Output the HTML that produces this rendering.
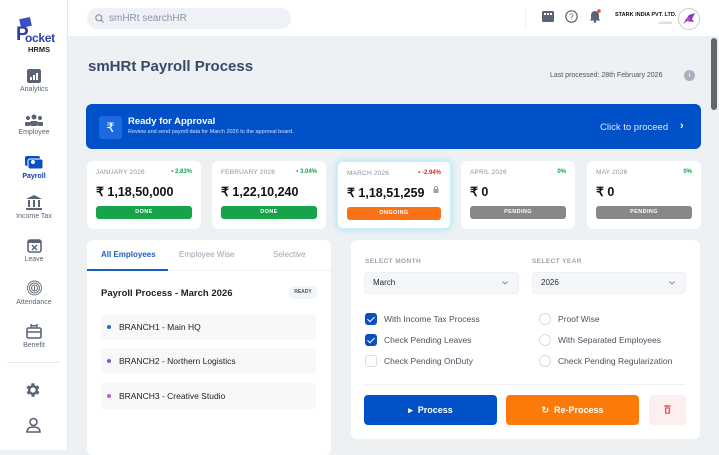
<!DOCTYPE html>
<html><head><meta charset="utf-8">
<style>
*{box-sizing:border-box;margin:0;padding:0}
body{width:719px;height:450px;overflow:hidden;background:#eef1f4;font-family:"Liberation Sans",sans-serif;position:relative;color:#1c2430}
.abs{position:absolute}
.side{left:0;top:0;width:68px;height:450px;background:#fff;border-right:1px solid #e3e6ea}
.nav{position:absolute;left:0;width:68px;text-align:center;font-size:7px;color:#5b6475}
.nav svg{display:block;margin:0 auto 3px}
.top{left:68px;top:0;width:651px;height:36px;background:#fff}
.card{background:#fff;border-radius:6px;height:68px;top:161px;width:114px;padding:8px 9px}
.card .m{font-size:6.5px;color:#8a93a0;letter-spacing:.2px}
.card .p{position:absolute;right:9px;top:8px;font-size:6px;font-weight:bold;color:#16a34a}
.card .v{font-size:12.5px;font-weight:bold;margin-top:8px;color:#111}
.card .b{position:absolute;left:9px;right:9px;top:45px;height:13px;border-radius:3px;color:#fff;font-size:5.5px;font-weight:bold;text-align:center;line-height:13px;letter-spacing:.4px}
.br{left:101px;width:215px;height:26px;background:#f7f8fa;border-radius:4px;font-size:8.5px;line-height:26px;padding-left:18px;color:#222}
.br i{position:absolute;left:6px;top:11px;width:4px;height:4px;border-radius:50%}
.cb{position:absolute;font-size:8.5px;color:#4a5260}
.cb b{position:absolute;left:-19px;top:-1px;width:12px;height:12px;border-radius:3px;border:1px solid #d9dde3;background:#fff}
.cb b.on{background:#0b4fc4;border-color:#0b4fc4}
.cb b.on:after{content:"";position:absolute;left:3px;top:1px;width:3px;height:6px;border:solid #fff;border-width:0 1.5px 1.5px 0;transform:rotate(45deg)}
.cb b.r{border-radius:50%}
.chev{position:absolute;right:10px;top:8px}
</style></head><body>
<div class="abs side">
  <div class="abs" style="left:16px;top:18px;width:40px;height:34px">
    <div class="abs" style="left:4px;top:0;width:11px;height:9px;background:#3b4fc4;transform:rotate(-12deg)"></div>
    <div class="abs" style="left:0;top:7px;font-size:19px;font-weight:bold;color:#2f3fa8;line-height:19px">P</div>
    <div class="abs" style="left:9px;top:13px;font-size:12px;font-weight:bold;color:#2f3fa8;letter-spacing:-.3px">ocket</div>
    <div class="abs" style="left:12px;top:27px;font-size:7.5px;font-weight:bold;color:#222">HRMS</div>
  </div>
  <div class="nav" style="top:69px"><svg width="14" height="14"><rect width="14" height="14" rx="2" fill="#5b6475"/><rect x="3" y="8" width="2" height="3" fill="#fff"/><rect x="6" y="6" width="2" height="5" fill="#fff"/><rect x="9" y="4" width="2" height="7" fill="#fff"/></svg>Analytics</div>
  <div class="nav" style="top:114px"><svg width="18" height="12"><circle cx="9" cy="3" r="2.5" fill="#5b6475"/><circle cx="3" cy="4" r="2" fill="#5b6475"/><circle cx="15" cy="4" r="2" fill="#5b6475"/><rect x="5" y="7" width="8" height="5" rx="2" fill="#5b6475"/><rect x="0" y="8" width="5" height="4" rx="1" fill="#5b6475"/><rect x="13" y="8" width="5" height="4" rx="1" fill="#5b6475"/></svg>Employee</div>
  <div class="nav" style="top:156px;color:#0b3fa8;font-weight:bold"><svg width="18" height="14"><rect x="0" y="0" width="15" height="10" rx="2" fill="#0b4fc4"/><rect x="3" y="3" width="15" height="10" rx="2" fill="#0b4fc4" stroke="#fff" stroke-width="1"/><circle cx="8" cy="6" r="2" fill="#fff"/></svg>Payroll</div>
  <div class="nav" style="top:195px"><svg width="16" height="15"><path d="M8 0 L16 4 L0 4 Z" fill="#5b6475"/><rect x="2" y="5" width="2" height="7" fill="#5b6475"/><rect x="7" y="5" width="2" height="7" fill="#5b6475"/><rect x="12" y="5" width="2" height="7" fill="#5b6475"/><rect x="0" y="13" width="16" height="2" fill="#5b6475"/></svg>Income Tax</div>
  <div class="nav" style="top:238px"><svg width="15" height="15"><rect x="1" y="2" width="13" height="12" rx="2" fill="none" stroke="#5b6475" stroke-width="1.6"/><rect x="1" y="2" width="13" height="3" fill="#5b6475"/><path d="M5 7 L10 12 M10 7 L5 12" stroke="#5b6475" stroke-width="1.4"/></svg>Leave</div>
  <div class="nav" style="top:280px"><svg width="15" height="16"><g fill="none" stroke="#6b7380" stroke-width="1"><circle cx="7.5" cy="8" r="7"/><circle cx="7.5" cy="8" r="5"/><circle cx="7.5" cy="8" r="3"/><path d="M7.5 6v5"/></g></svg>Attendance</div>
  <div class="nav" style="top:324px"><svg width="16" height="15"><rect x="1" y="4" width="14" height="10" rx="1.5" fill="none" stroke="#5b6475" stroke-width="1.6"/><path d="M1 8h14M5 4 V0 M11 4 V0 M5 1 Q8 3 11 1" stroke="#5b6475" stroke-width="1.4" fill="none"/></svg>Benefit</div>
  <div class="abs" style="left:7px;top:362px;width:53px;height:1px;background:#e3e6ea"></div>
  <svg class="abs" style="left:24px;top:381px" width="18" height="18" viewBox="0 0 24 24"><path fill="#5b6475" d="M19.4 13a7.5 7.5 0 000-2l2.1-1.6-2-3.5-2.5 1a7 7 0 00-1.7-1L15 3h-4l-.4 2.9a7 7 0 00-1.7 1l-2.5-1-2 3.5L6.6 11a7.5 7.5 0 000 2l-2.1 1.6 2 3.5 2.5-1a7 7 0 001.7 1L11 21h4l.4-2.9a7 7 0 001.7-1l2.5 1 2-3.5zM13 15.5A3.5 3.5 0 1113 8.5a3.5 3.5 0 010 7z" transform="translate(-1 0)"/></svg>
  <svg class="abs" style="left:26px;top:417px" width="15" height="16"><circle cx="7.5" cy="5" r="3.5" fill="none" stroke="#5b6475" stroke-width="1.6"/><path d="M1 15 Q1 10 7.5 10 Q14 10 14 15 Z" fill="none" stroke="#5b6475" stroke-width="1.6"/></svg>
</div>
<div class="abs top">
  <div class="abs" style="left:19px;top:8px;width:204px;height:21px;border-radius:11px;background:#eef2f7;font-size:10px;color:#8a93a0;line-height:21px;padding-left:22px">smHRt searchHR
    <svg class="abs" style="left:8px;top:6px" width="9" height="9"><circle cx="3.8" cy="3.8" r="3" fill="none" stroke="#8a93a0" stroke-width="1.2"/><path d="M6 6 L8.5 8.5" stroke="#8a93a0" stroke-width="1.2"/></svg>
  </div>
  <div class="abs" style="left:457px;top:8px;width:1px;height:20px;background:#eef0f2"></div>
  <svg class="abs" style="left:474px;top:11px" width="12" height="11"><rect x="0" y="0" width="12" height="11" rx="1.5" fill="#5b6475"/><rect x="2" y="2" width="2" height="2" fill="#fff"/><rect x="5" y="2" width="2" height="2" fill="#fff"/><rect x="8" y="2" width="2" height="2" fill="#fff"/></svg>
  <svg class="abs" style="left:497px;top:10px" width="13" height="13"><circle cx="6.5" cy="6.5" r="5.7" fill="none" stroke="#5b6475" stroke-width="1.2"/><text x="6.5" y="9.5" font-size="8" text-anchor="middle" fill="#5b6475" font-family="Liberation Sans">?</text></svg>
  <svg class="abs" style="left:521px;top:9px" width="12" height="14"><path d="M6 2 Q10 2 10 7 V10 L11.5 11.5 H0.5 L2 10 V7 Q2 2 6 2Z" fill="#5b6475"/><circle cx="6" cy="12.5" r="1.3" fill="#5b6475"/><circle cx="10" cy="2" r="1.8" fill="#ef4444"/></svg>
  <div class="abs" style="left:547px;top:12px;font-size:5.5px;font-weight:bold;color:#111">STARK INDIA PVT. LTD.</div>
  <div class="abs" style="left:591px;top:20px;font-size:4px;color:#aaa">ADMIN</div>
  <div class="abs" style="left:610px;top:8px;width:22px;height:22px;border-radius:50%;border:1px solid #ccc;background:#fff">
    <svg width="20" height="20"><path d="M4 15 L10 6 L16 4 L13 10 L15 13 L8 12Z" fill="#7a3bd1"/><path d="M6 10 L12 8 L10 13Z" fill="#e63c7a"/></svg>
  </div>
</div>
<div class="abs" style="left:711px;top:38px;width:6px;height:72px;background:#666;border-radius:3px"></div>
<div class="abs" style="left:88px;top:58px;font-size:15px;font-weight:bold;color:#3a4766">smHRt Payroll Process</div>
<div class="abs" style="left:550px;top:72px;font-size:7px;color:#4a5260">Last processed: 28th February 2026</div>
<div class="abs" style="left:684px;top:70px;width:11px;height:11px;border-radius:50%;background:#a8b0bb;color:#fff;font-size:7px;text-align:center;line-height:11px">i</div>
<div class="abs" style="left:86px;top:104px;width:615px;height:45px;background:#0050c8;border-radius:6px;color:#fff">
  <div class="abs" style="left:13px;top:12px;width:23px;height:23px;background:#1d6ae0;border-radius:3px;text-align:center;line-height:23px;font-size:13px">₹</div>
  <div class="abs" style="left:42px;top:12px;font-size:9.5px;font-weight:bold">Ready for Approval</div>
  <div class="abs" style="left:42px;top:25px;font-size:5.5px;color:#cfe0ff">Review and send payroll data for March 2026 to the approval board.</div>
  <div class="abs" style="left:514px;top:18px;font-size:9.5px;color:#dce8ff">Click to proceed</div>
  <div class="abs" style="left:594px;top:16px;font-size:11px;color:#fff;font-weight:bold">›</div>
</div>
<div class="abs card" style="left:87px"><div class="m">JANUARY 2026</div><div class="p">• 2.83%</div><div class="v">₹ 1,18,50,000</div><div class="b" style="background:#16a34a">DONE</div></div>
<div class="abs card" style="left:212px"><div class="m">FEBRUARY 2026</div><div class="p">• 3.04%</div><div class="v">₹ 1,22,10,240</div><div class="b" style="background:#16a34a">DONE</div></div>
<div class="abs card" style="left:337px;box-shadow:0 0 6px 2px #bfe9f5;border:1px solid #cdeff8"><div class="m">MARCH 2026</div><div class="p" style="color:#dc2626">• -2.94%</div><div class="v">₹ 1,18,51,259</div>
<svg class="abs" style="left:95px;top:24px" width="6" height="7"><path d="M1.5 3V2a1.5 1.5 0 013 0v1" fill="none" stroke="#9aa3b0" stroke-width="1"/><rect x="0.5" y="3" width="5" height="4" fill="#9aa3b0"/></svg>
<div class="b" style="background:#f97316">ONGOING</div></div>
<div class="abs card" style="left:461px"><div class="m">APRIL 2026</div><div class="p">0%</div><div class="v">₹ 0</div><div class="b" style="background:#888">PENDING</div></div>
<div class="abs card" style="left:587px"><div class="m">MAY 2026</div><div class="p">0%</div><div class="v">₹ 0</div><div class="b" style="background:#888">PENDING</div></div>
<div class="abs" style="left:87px;top:240px;width:244px;height:215px;background:#fff;border-radius:6px">
  <div class="abs" style="left:0;top:0;width:244px;height:31px;border-bottom:1px solid #eef0f2"></div>
  <div class="abs" style="left:14px;top:10px;font-size:8px;font-weight:bold;color:#1d5fbf">All Employees</div>
  <div class="abs" style="left:0;top:29px;width:81px;height:2px;background:#1d5fbf"></div>
  <div class="abs" style="left:92px;top:10px;font-size:8px;color:#9aa3b0">Employee Wise</div>
  <div class="abs" style="left:186px;top:10px;font-size:8px;color:#9aa3b0">Selective</div>
  <div class="abs" style="left:14px;top:48px;font-size:9.5px;font-weight:bold;color:#222">Payroll Process - March 2026</div>
  <div class="abs" style="left:202px;top:46px;width:28px;height:13px;border-radius:5px;background:#f1f4f8;font-size:5px;font-weight:bold;color:#555;text-align:center;line-height:13px">READY</div>
</div>
<div class="abs br" style="top:314px"><i style="background:#1d6fd8"></i>BRANCH1 - Main HQ</div>
<div class="abs br" style="top:348px"><i style="background:#7c5cd6"></i>BRANCH2 - Northern Logistics</div>
<div class="abs br" style="top:383px"><i style="background:#b65ce0"></i>BRANCH3 - Creative Studio</div>
<div class="abs" style="left:351px;top:240px;width:349px;height:199px;background:#fff;border-radius:6px">
  <div class="abs" style="left:14px;top:18px;font-size:6.5px;font-weight:bold;color:#9aa3b0;letter-spacing:.4px">SELECT MONTH</div>
  <div class="abs" style="left:181px;top:18px;font-size:6.5px;font-weight:bold;color:#9aa3b0;letter-spacing:.4px">SELECT YEAR</div>
  <div class="abs" style="left:13px;top:32px;width:155px;height:22px;border-radius:4px;background:#f4f6f9;border:1px solid #eceff3;font-size:8px;line-height:20px;padding-left:8px">March<svg class="chev" width="6" height="4"><path d="M0.5 0.5L3 3L5.5 0.5" fill="none" stroke="#888" stroke-width="0.9"/></svg></div>
  <div class="abs" style="left:181px;top:32px;width:154px;height:22px;border-radius:4px;background:#f4f6f9;border:1px solid #eceff3;font-size:8px;line-height:20px;padding-left:8px">2026<svg class="chev" width="6" height="4"><path d="M0.5 0.5L3 3L5.5 0.5" fill="none" stroke="#888" stroke-width="0.9"/></svg></div>
  <div class="cb" style="left:33px;top:74px"><b class="on"></b>With Income Tax Process</div>
  <div class="cb" style="left:33px;top:95px"><b class="on"></b>Check Pending Leaves</div>
  <div class="cb" style="left:33px;top:116px"><b></b>Check Pending OnDuty</div>
  <div class="cb" style="left:207px;top:74px"><b class="r"></b>Proof Wise</div>
  <div class="cb" style="left:207px;top:95px"><b class="r"></b>With Separated Employees</div>
  <div class="cb" style="left:207px;top:116px"><b class="r"></b>Check Pending Regularization</div>
  <div class="abs" style="left:14px;top:144px;width:320px;height:1px;background:#eef0f2"></div>
  <div class="abs" style="left:13px;top:155px;width:133px;height:30px;border-radius:4px;background:#0050c8;color:#fff;font-size:9px;font-weight:bold;text-align:center;line-height:30px">▸&nbsp; Process</div>
  <div class="abs" style="left:155px;top:155px;width:133px;height:30px;border-radius:4px;background:#fb7a0a;color:#fff;font-size:9px;font-weight:bold;text-align:center;line-height:30px">↻&nbsp; Re-Process</div>
  <div class="abs" style="left:298px;top:155px;width:37px;height:30px;border-radius:4px;background:#fdeff0">
    <svg class="abs" style="left:15px;top:10px" width="7" height="9"><rect x="0" y="0.5" width="7" height="1.2" fill="#e05260"/><rect x="2.5" y="0" width="2" height="1" fill="#e05260"/><rect x="1" y="2.2" width="5" height="6.5" rx="0.8" fill="#e05260"/><rect x="2.3" y="3.5" width="2.4" height="4" fill="#fdeff0"/></svg>
  </div>
</div>
</body></html>
